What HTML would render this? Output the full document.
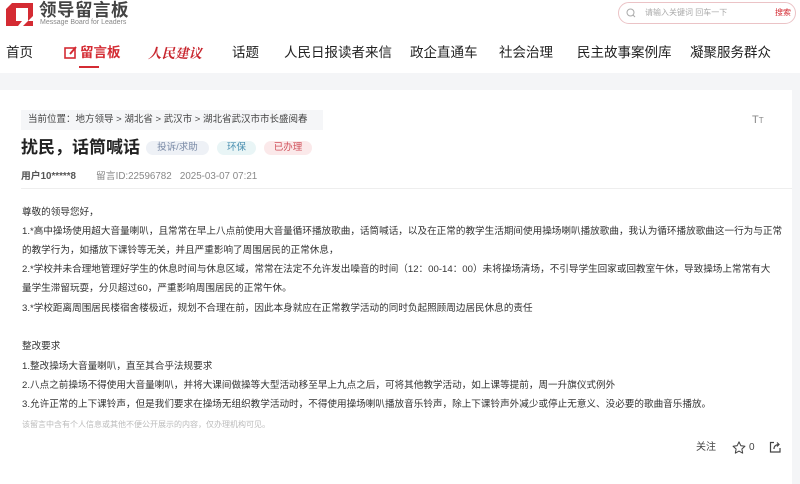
<!DOCTYPE html>
<html><head><meta charset="utf-8"><style>
*{margin:0;padding:0;box-sizing:border-box}
body{width:800px;height:484px;overflow:hidden;background:#f4f5f7;font-family:"Liberation Sans","Noto Sans CJK SC",sans-serif;color:#333;position:relative}
.hdr{position:absolute;left:0;top:0;width:800px;height:73px;background:#fff}
.abs{position:absolute;white-space:nowrap;line-height:1}
.nav{font-size:13.5px;color:#222;top:46px}
.card{position:absolute;left:0;top:90px;width:792px;height:394px;background:#fff}
.p{position:absolute;left:22px;font-size:9.6px;color:#333;white-space:nowrap;line-height:1}
.tag{position:absolute;top:141px;height:14px;border-radius:7px;font-size:9.5px;line-height:14px;text-align:center}
</style></head><body>
<div class="hdr">
<svg class="abs" style="left:6px;top:3px" width="27" height="23" viewBox="0 0 27 23"><path d="M6 0H27V13L22 18V5H10V18H16L12 23H0V6Z" fill="#d42b33"/><path d="M17 23L22 18H27V23Z" fill="#d42b33"/></svg>
<div class="abs" style="left:39px;top:2px;font-size:17.5px;font-weight:bold;color:#444;letter-spacing:0.5px">领导留言板</div>
<div class="abs" style="left:40px;top:19px;font-size:7px;color:#888">Message Board for Leaders</div>
<div class="abs" style="left:618px;top:2px;width:178px;height:22px;border:1px solid #ebc3c6;border-radius:11px"></div>
<svg class="abs" style="left:626px;top:8px" width="10" height="10"><circle cx="4.5" cy="4.5" r="3.5" fill="none" stroke="#aaa"/><path d="M7 7l2 2" stroke="#aaa"/></svg>
<div class="abs" style="left:645px;top:9px;font-size:8px;color:#aaa">请输入关键词 回车一下</div>
<div class="abs" style="left:775px;top:9px;font-size:8px;color:#d42b33">搜索</div>
<div class="abs nav" style="left:6px">首页</div>
<svg class="abs" style="left:64px;top:45px" width="14" height="14"><rect x="1" y="3" width="10" height="10" fill="none" stroke="#d42b33" stroke-width="1.6"/><path d="M6 9l6-7" stroke="#d42b33" stroke-width="2"/></svg>
<div class="abs nav" style="left:80px;color:#d42b33;font-weight:bold">留言板</div>
<div class="abs" style="left:79px;top:66px;width:20px;height:2px;background:#d42b33"></div>
<div class="abs nav" style="left:148px;color:#c8262e;font-style:italic;font-weight:bold;font-family:'Noto Serif CJK SC',serif">人民建议</div>
<div class="abs nav" style="left:232px">话题</div>
<div class="abs nav" style="left:284px">人民日报读者来信</div>
<div class="abs nav" style="left:410px">政企直通车</div>
<div class="abs nav" style="left:499px">社会治理</div>
<div class="abs nav" style="left:577px">民主故事案例库</div>
<div class="abs nav" style="left:690px">凝聚服务群众</div>
</div>
<div class="card"></div>
<div class="abs" style="left:21px;top:110px;width:302px;height:20px;background:#f5f6f8"></div>
<div class="abs" style="left:28px;top:115px;font-size:9.5px;color:#444">当前位置：地方领导 &gt; 湖北省 &gt; 武汉市 &gt; 湖北省武汉市市长盛阅春</div>
<div class="abs" style="left:752px;top:115px;font-size:11px;color:#888">T<span style="font-size:8px">T</span></div>
<div class="abs" style="left:21px;top:139px;font-size:17px;font-weight:bold;color:#222">扰民，话筒喊话</div>
<div class="tag" style="left:146px;width:63px;background:#eef1f6;color:#7a8aa6">投诉/求助</div>
<div class="tag" style="left:217px;width:39px;background:#e9f5f6;color:#4a8fb0">环保</div>
<div class="tag" style="left:264px;width:48px;background:#fbe9ea;color:#d0505a">已办理</div>
<div class="abs" style="left:21px;top:172px;font-size:9.8px;color:#555;font-weight:bold">用户10*****8</div>
<div class="abs" style="left:96px;top:172px;font-size:9.8px;color:#888">留言ID:22596782&nbsp;&nbsp;&nbsp;2025-03-07 07:21</div>
<div class="abs" style="left:21px;top:188px;width:771px;border-top:1px solid #eee"></div>
<div class="p" style="top:208px">尊敬的领导您好，</div>
<div class="p" style="top:227px">1.*高中操场使用超大音量喇叭，且常常在早上八点前使用大音量循环播放歌曲，话筒喊话，以及在正常的教学生活期间使用操场喇叭播放歌曲，我认为循环播放歌曲这一行为与正常</div>
<div class="p" style="top:246px">的教学行为，如播放下课铃等无关，并且严重影响了周围居民的正常休息，</div>
<div class="p" style="top:265px">2.*学校并未合理地管理好学生的休息时间与休息区域，常常在法定不允许发出噪音的时间（12：00-14：00）未将操场清场，不引导学生回家或回教室午休，导致操场上常常有大</div>
<div class="p" style="top:284px">量学生滞留玩耍，分贝超过60，严重影响周围居民的正常午休。</div>
<div class="p" style="top:304px">3.*学校距离周围居民楼宿舍楼极近，规划不合理在前，因此本身就应在正常教学活动的同时负起照顾周边居民休息的责任</div>
<div class="p" style="top:342px">整改要求</div>
<div class="p" style="top:362px">1.整改操场大音量喇叭，直至其合乎法规要求</div>
<div class="p" style="top:381px">2.八点之前操场不得使用大音量喇叭，并将大课间做操等大型活动移至早上九点之后，可将其他教学活动，如上课等提前，周一升旗仪式例外</div>
<div class="p" style="top:400px">3.允许正常的上下课铃声，但是我们要求在操场无组织教学活动时，不得使用操场喇叭播放音乐铃声，除上下课铃声外减少或停止无意义、没必要的歌曲音乐播放。</div>
<div class="p" style="top:421px;font-size:8px;color:#bbb">该留言中含有个人信息或其他不便公开展示的内容，仅办理机构可见。</div>
<div class="abs" style="left:696px;top:443px;font-size:10px;color:#444">关注</div>
<svg class="abs" style="left:732px;top:441px" width="14" height="13" viewBox="0 0 24 23"><path d="M12 1.5l3.2 6.8 7.3.9-5.4 5 1.4 7.3L12 17.9l-6.5 3.6 1.4-7.3-5.4-5 7.3-.9z" fill="none" stroke="#444" stroke-width="1.8" stroke-linejoin="round"/></svg>
<div class="abs" style="left:749px;top:443px;font-size:10px;color:#444">0</div>
<svg class="abs" style="left:769px;top:441px" width="12" height="12" viewBox="0 0 12 12"><path d="M5 1.5H1.5v9.5h9.5V7" fill="none" stroke="#444" stroke-width="1.2"/><path d="M5 8c0-3 2-4.5 5-4.5M8 1.5l2 2-2 2" fill="none" stroke="#444" stroke-width="1.2"/></svg>
</body></html>
